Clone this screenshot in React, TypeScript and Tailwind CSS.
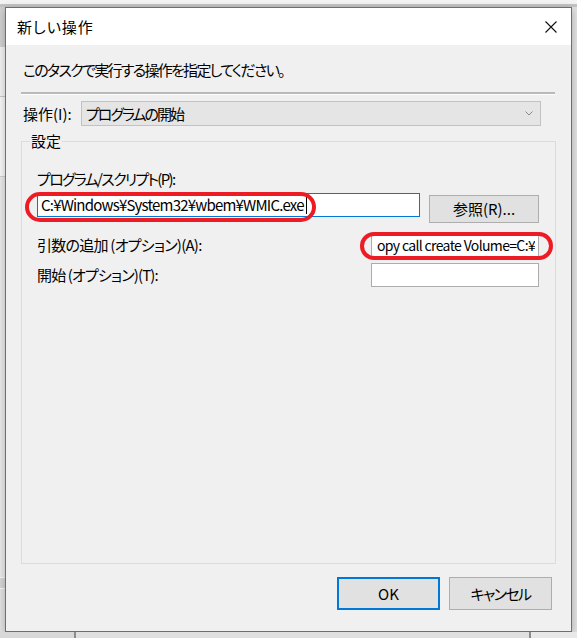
export default function App() {
  return (
    <div className="w-[577px] h-[638px] overflow-hidden bg-[#e2e2e2] font-['Noto_Sans_CJK_JP','Noto_Sans',sans-serif] [font-feature-settings:'palt'] text-[15px] leading-[20px] text-black">
      <div className="h-[4px] bg-[#f3f3f3]" />
      <div className="h-[3px] bg-[#c4c4c4]" />
      <div className="flex">
        <div className="w-[5px] flex flex-col">
          <div className="h-[40px] bg-[#d0d0d0]" />
          <div className="h-[50px] bg-[#f2f2f2] border-b border-[#c8c8c8]" />
          <div className="h-[80px] bg-[#f7f7f7] border-b border-[#d0d0d0]" />
          <div className="h-[400px] bg-[#e9e9e9]" />
          <div className="h-[12px] bg-[#d6d6d6] border-y border-[#f8f8f8]" />
        </div>
        <div className="w-[567px] h-[625px] border border-[#6e6e6e] bg-[#f0f0f0] flex flex-col shadow-[0_2px_8px_rgba(0,0,0,0.25)]">
          <div className="h-[37px] bg-white flex items-center justify-between pl-[11px] pr-[14px]">
            <span className="tracking-[1px]">新しい操作</span>
            <svg width="12" height="12" viewBox="0 0 12 12" className="block">
              <path d="M0.5 0.5 L11.5 11.5 M11.5 0.5 L0.5 11.5" stroke="#111" strokeWidth="1.1" fill="none" />
            </svg>
          </div>
          <div className="flex-1 flex flex-col">
            <div className="pt-[15px] pl-[17px] tracking-[-1.7px]">このタスクで実行する操作を指定してください。</div>
            <div className="mt-[12px] ml-[15px] w-[534px] h-[3px] border-t-2 border-t-[#b9b9b9] border-b border-b-white" />
            <div className="mt-[6px] pl-[17px] flex items-center">
              <span className="w-[58px]">操作(I):</span>
              <div className="w-[460px] h-[25px] bg-[#e5e5e5] border border-[#c2c2c2] flex items-center justify-between pl-[4px] pr-[7px]">
                <span className="tracking-[-2px]">プログラムの開始</span>
                <svg width="8" height="5" viewBox="0 0 8 5" className="block">
                  <path d="M0.5 0.5 L4 4 L7.5 0.5" stroke="#8a8a8a" strokeWidth="1" fill="none" />
                </svg>
              </div>
            </div>
            <fieldset className="mt-[5px] ml-[15px] w-[535px] h-[433px] min-w-0 border border-[#dcdcdc] pl-[15px]">
              <legend className="ml-[-7px] px-[1px]">設定</legend>
              <div className="mt-[18px] tracking-[-1.7px]">プログラム/スクリプト(P):</div>
              <div className="mt-[4px] flex items-start">
                <div className="relative w-[383px] h-[24px] bg-white border border-[#0078d7] flex items-center pl-[3px]">
                  <span className="tracking-[-0.8px]">C:¥Windows¥System32¥wbem¥WMIC.exe</span>
                  <span className="ml-[2px] w-[1px] h-[17px] bg-black" />
                  <div className="absolute left-[-13px] top-[-2px] w-[291px] h-[30px] border-4 border-[#ed1c24] rounded-[15px]" />
                </div>
                <div className="ml-[9px] mt-[2px] w-[110px] h-[28px] bg-[#e1e1e1] border border-[#adadad] flex items-center justify-center">
                  参照(R)...
                </div>
              </div>
              <div className="mt-[10px] flex items-center justify-between pr-[16px]">
                <span className="tracking-[-0.75px]">引数の追加 (オプション)(A):</span>
                <div className="relative w-[168px] h-[24px] bg-white border border-[#acacac] flex items-center justify-end pr-[3px]">
                  <div className="overflow-hidden w-[162px] flex justify-end">
                    <span className="whitespace-nowrap text-[14px] tracking-[-0.65px]">opy call create Volume=C:¥</span>
                  </div>
                  <div className="absolute left-[-12px] top-[-2px] w-[193px] h-[28px] border-4 border-[#ed1c24] rounded-[14px]" />
                </div>
              </div>
              <div className="mt-[6px] flex items-center justify-between pr-[16px]">
                <span className="tracking-[-0.85px]">開始 (オプション)(T):</span>
                <div className="w-[168px] h-[24px] bg-white border border-[#acacac]" />
              </div>
            </fieldset>
            <div className="mt-[13px] flex justify-end gap-[9px] pr-[19px]">
              <div className="w-[103px] h-[33px] bg-[#e1e1e1] border-2 border-[#0078d7] flex items-center justify-center">OK</div>
              <div className="w-[103px] h-[33px] bg-[#e1e1e1] border border-[#adadad] flex items-center justify-center tracking-[-1.6px]">キャンセル</div>
            </div>
          </div>
        </div>
      </div>
      <div className="h-[6px] flex">
        <div className="w-[74px] bg-[#d8d8d8]" />
        <div className="w-[2px] bg-[#8c8c8c]" />
        <div className="w-[453px] bg-[#e0e0e0]" />
        <div className="w-[2px] bg-[#8c8c8c]" />
        <div className="flex-1 bg-[#e8e8e8]" />
      </div>
    </div>
  );
}
